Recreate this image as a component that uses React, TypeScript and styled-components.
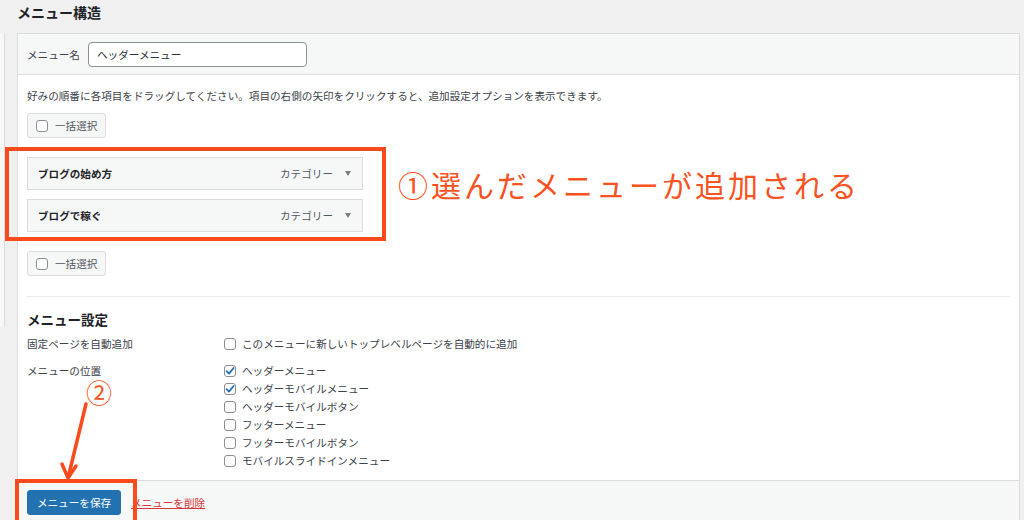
import React from 'react';
import styled, { createGlobalStyle } from 'styled-components';

const ORANGE = '#f94b1b';

const GlobalStyle = createGlobalStyle`
  html, body {
    margin: 0;
    padding: 0;
  }
  body {
    width: 1024px;
    height: 520px;
    overflow: hidden;
    background: #f0f0f1;
    font-family: "Noto Sans CJK JP", "Noto Sans", sans-serif;
    font-size: 10.6px;
    color: #3c434a;
  }
`;

const PageTitle = styled.h2`
  margin: 0;
  padding-left: 17px;
  height: 33px;
  line-height: 24px;
  font-size: 14px;
  font-weight: 700;
  color: #1d2327;
`;

const Layout = styled.div`
  display: flex;
  align-items: flex-start;
`;

const SideStub = styled.div`
  width: 4px;
  height: 294px;
  background: #f8f8f8;
  border-right: 1px solid #dcdcde;
`;

const MenuBox = styled.div`
  margin-left: 12px;
  width: 1003px;
  box-sizing: border-box;
  border: 1px solid #dcdcde;
  background: #fff;
`;

const BoxHeader = styled.div`
  height: 41px;
  box-sizing: border-box;
  border-bottom: 1px solid #dcdcde;
  background: #f6f7f7;
  padding: 0 9px;
  display: flex;
  align-items: center;
  gap: 8px;
`;

const NameInput = styled.input`
  width: 219px;
  height: 25px;
  box-sizing: border-box;
  border: 1px solid #8c8f94;
  border-radius: 4px;
  padding: 0 8px;
  font: inherit;
  color: #2c3338;
  background: #fff;
`;

const BoxBody = styled.div`
  padding: 0 9px 10px;
`;

const Instruction = styled.p`
  margin: 13px 0 9px;
  line-height: 16px;
`;

const BulkButton = styled.div`
  display: inline-flex;
  align-items: center;
  gap: 7px;
  height: 25px;
  box-sizing: border-box;
  padding: 0 8px;
  border: 1px solid #dcdcde;
  border-radius: 3px;
  background: #f6f7f7;
  color: #50575e;
`;

const ItemsArea = styled.div`
  position: relative;
  width: 336px;
  margin: 19px 0;
  display: flex;
  flex-direction: column;
  gap: 9px;
`;

const MenuItem = styled.div`
  height: 33px;
  box-sizing: border-box;
  border: 1px solid #dcdcde;
  background: #f6f7f7;
  display: flex;
  align-items: center;
  padding: 0 11px 0 10px;
`;

const ItemTitle = styled.span`
  flex: 1;
  font-weight: 700;
  color: #1d2327;
`;

const ItemType = styled.span`
  color: #50575e;
`;

const Caret = styled.span`
  margin-left: 12px;
  width: 0;
  height: 0;
  border-left: 3.5px solid transparent;
  border-right: 3.5px solid transparent;
  border-top: 5px solid #787c82;
`;

const Frame = styled.div`
  position: absolute;
  border: 4px solid ${ORANGE};
  pointer-events: none;
`;

const ItemsFrame = styled(Frame)`
  left: -22px;
  top: -10px;
  width: 373px;
  height: 86px;
`;

const Callout = styled.div`
  position: absolute;
  left: 371px;
  top: 9px;
  font-size: 30px;
  line-height: 36px;
  letter-spacing: 3px;
  white-space: nowrap;
  color: #fb5222;
`;

const Divider = styled.div`
  margin-top: 20px;
  height: 1px;
  background: #ededed;
  box-shadow: 0 1px 2px rgba(0, 0, 0, 0.03);
`;

const SettingsTitle = styled.h3`
  margin: 12px 0 6px;
  font-size: 13.5px;
  line-height: 20px;
  font-weight: 700;
  color: #1d2327;
`;

const SettingsGrid = styled.div`
  display: grid;
  grid-template-columns: 197px 1fr;
  row-gap: 9px;
`;

const SettingLabel = styled.div`
  line-height: 18px;
`;

const OptionList = styled.div`
  display: flex;
  flex-direction: column;
`;

const Option = styled.label`
  display: flex;
  align-items: center;
  gap: 6px;
  height: 18px;
  line-height: 18px;
`;

const CheckBox = styled.span`
  flex: none;
  width: 12px;
  height: 12px;
  box-sizing: border-box;
  border: 1px solid #8c8f94;
  border-radius: 3px;
  background: #fff;
  display: flex;
  align-items: center;
  justify-content: center;
`;

const BoxFooter = styled.div`
  border-top: 1px solid #dcdcde;
  background: #f6f7f7;
  padding: 9px 9px 12px;
  display: flex;
  align-items: center;
  gap: 10px;
`;

const SaveWrap = styled.div`
  position: relative;
`;

const SaveButton = styled.button`
  height: 25px;
  width: 94px;
  padding: 0;
  border: 1px solid #2271b1;
  border-radius: 3px;
  background: #2271b1;
  color: #fff;
  font: inherit;
`;

const SaveFrame = styled(Frame)`
  left: -12px;
  top: -11px;
  width: 114px;
  height: 50px;
`;

const StepBadge = styled.div`
  position: absolute;
  left: 59px;
  top: -110px;
  font-size: 26px;
  line-height: 24px;
  color: #fb5222;
`;

const ArrowSvg = styled.svg`
  position: absolute;
  left: 36px;
  top: -88px;
  overflow: visible;
`;

const DeleteLink = styled.a`
  color: #d63638;
  text-decoration: underline;
`;

function Check({ checked }: { checked?: boolean }) {
  return (
    <CheckBox>
      {checked ? (
        <svg width="10" height="10" viewBox="0 0 10 10">
          <path d="M1.6 5.2 L4 7.6 L8.6 2" fill="none" stroke="#2271b1" strokeWidth="1.8" strokeLinecap="round" strokeLinejoin="round" />
        </svg>
      ) : null}
    </CheckBox>
  );
}

const items = ['ブログの始め方', 'ブログで稼ぐ'];

const locations: { name: string; checked?: boolean }[] = [
  { name: 'ヘッダーメニュー', checked: true },
  { name: 'ヘッダーモバイルメニュー', checked: true },
  { name: 'ヘッダーモバイルボタン' },
  { name: 'フッターメニュー' },
  { name: 'フッターモバイルボタン' },
  { name: 'モバイルスライドインメニュー' },
];

export default function App(): JSX.Element {
  return (
    <>
      <GlobalStyle />
      <PageTitle>メニュー構造</PageTitle>
      <Layout>
        <SideStub />
        <MenuBox>
          <BoxHeader>
            <span>メニュー名</span>
            <NameInput defaultValue="ヘッダーメニュー" readOnly />
          </BoxHeader>
          <BoxBody>
            <Instruction>
              好みの順番に各項目をドラッグしてください。項目の右側の矢印をクリックすると、追加設定オプションを表示できます。
            </Instruction>
            <BulkButton>
              <Check />
              一括選択
            </BulkButton>
            <ItemsArea>
              {items.map((t) => (
                <MenuItem key={t}>
                  <ItemTitle>{t}</ItemTitle>
                  <ItemType>カテゴリー</ItemType>
                  <Caret />
                </MenuItem>
              ))}
              <ItemsFrame />
              <Callout>①選んだメニューが追加される</Callout>
            </ItemsArea>
            <BulkButton>
              <Check />
              一括選択
            </BulkButton>
            <Divider />
            <SettingsTitle>メニュー設定</SettingsTitle>
            <SettingsGrid>
              <SettingLabel>固定ページを自動追加</SettingLabel>
              <OptionList>
                <Option>
                  <Check />
                  このメニューに新しいトップレベルページを自動的に追加
                </Option>
              </OptionList>
              <SettingLabel>メニューの位置</SettingLabel>
              <OptionList>
                {locations.map((l) => (
                  <Option key={l.name}>
                    <Check checked={l.checked} />
                    {l.name}
                  </Option>
                ))}
              </OptionList>
            </SettingsGrid>
          </BoxBody>
          <BoxFooter>
            <SaveWrap>
              <StepBadge>②</StepBadge>
              <ArrowSvg width="30" height="80" viewBox="0 0 30 80">
                <path d="M23 2 L5.5 74" stroke={ORANGE} strokeWidth="3.5" strokeLinecap="round" fill="none" />
                <path d="M-1 62 L5 76 L13 64" stroke={ORANGE} strokeWidth="3.5" strokeLinecap="round" strokeLinejoin="round" fill="none" />
              </ArrowSvg>
              <SaveButton>メニューを保存</SaveButton>
              <SaveFrame />
            </SaveWrap>
            <DeleteLink>メニューを削除</DeleteLink>
          </BoxFooter>
        </MenuBox>
      </Layout>
    </>
  );
}
